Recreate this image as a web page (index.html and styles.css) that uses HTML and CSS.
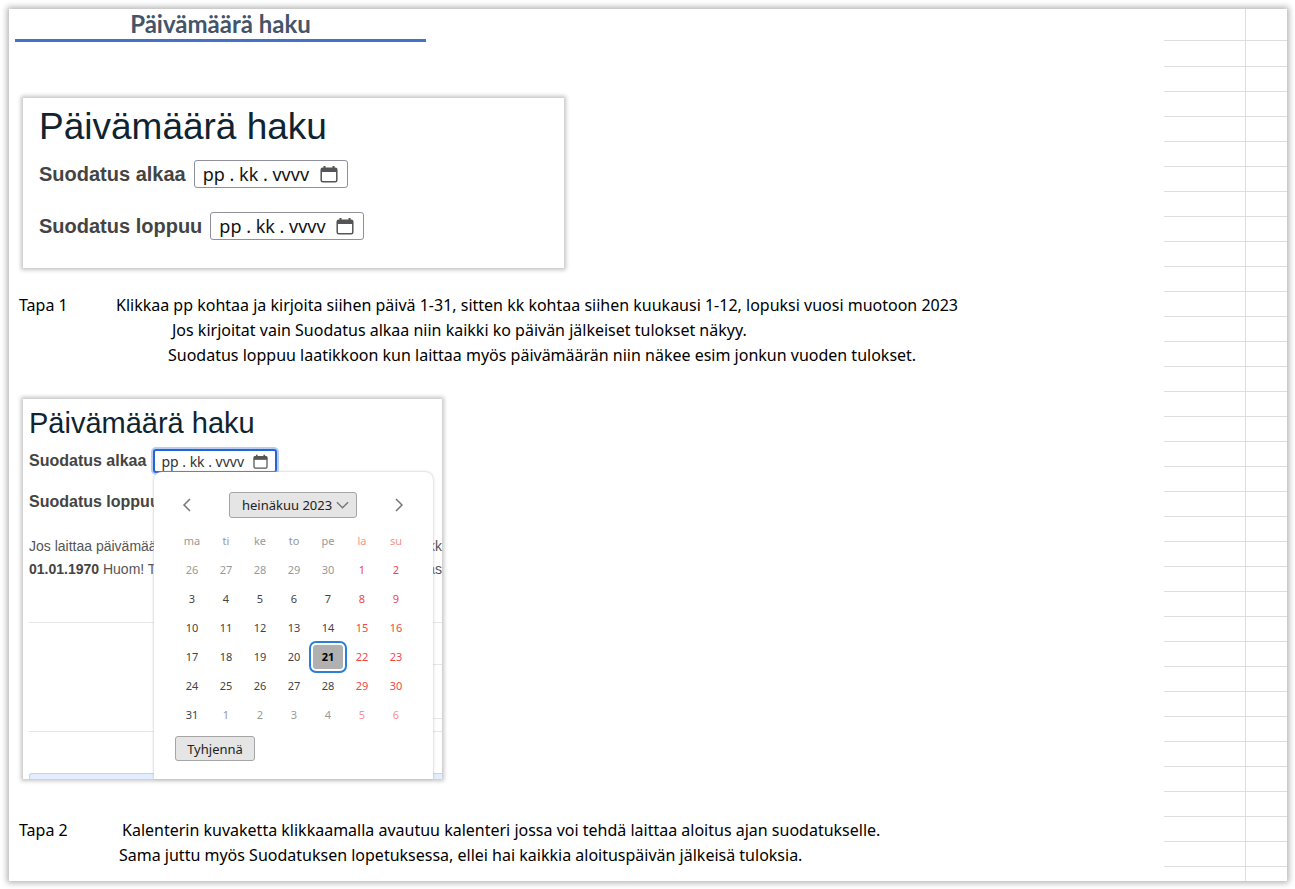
FILE: index.html
```html
<!DOCTYPE html>
<html lang="fi">
<head>
<meta charset="utf-8">
<title>Päivämäärä haku</title>
<link rel="stylesheet" href="styles.css">
</head>
<body>
<svg class="defs" aria-hidden="true">
  <symbol id="calendar" viewBox="0 0 18 18">
    <path d="M1 3h16v4H1z" fill="#555"/>
    <path d="M4.500 1v3M13.500 1v3" stroke="#555" stroke-width="2"/>
    <rect x="1.200" y="3.200" width="15.600" height="13.600" rx="1.500" fill="none" stroke="#555" stroke-width="1.500"/>
  </symbol>
</svg>
<div class="sheet">
  <main class="content">
    <h1 class="title">Päivämäärä haku</h1>

    <section class="card search">
      <h2 class="heading">Päivämäärä haku</h2>
      <div class="field">
        <label for="start">Suodatus alkaa</label>
        <span class="date"><input id="start" type="text" value="pp . kk . vvvv"><svg><use href="#calendar"/></svg></span>
      </div>
      <div class="field">
        <label for="end">Suodatus loppuu</label>
        <span class="date"><input id="end" type="text" value="pp . kk . vvvv"><svg><use href="#calendar"/></svg></span>
      </div>
    </section>

    <section class="step">
      <span class="name">Tapa 1</span>
      <div class="lines">
        <p>Klikkaa pp kohtaa ja kirjoita siihen päivä 1-31, sitten kk kohtaa siihen kuukausi 1-12, lopuksi vuosi muotoon 2023</p>
        <p class="deep">Jos kirjoitat vain Suodatus alkaa niin kaikki ko päivän jälkeiset tulokset näkyy.</p>
        <p class="mid">Suodatus loppuu laatikkoon kun laittaa myös päivämäärän niin näkee esim jonkun vuoden tulokset.</p>
      </div>
    </section>

    <section class="card picker">
      <h2 class="heading">Päivämäärä haku</h2>
      <div class="field">
        <label for="start2">Suodatus alkaa</label>
        <span class="date focused"><input id="start2" type="text" value="pp . kk . vvvv"><svg><use href="#calendar"/></svg></span>
      </div>
      <div class="field">Suodatus loppuu</div>
      <div class="note">
        <div><span>Jos laittaa päivämää</span><span>kk</span></div>
        <div><span><b>01.01.1970</b> Huom! T</span><span>as</span></div>
      </div>
      <div class="rules">
        <div class="rule first"></div>
        <div class="rule side"></div>
        <div class="rule side last"></div>
        <div class="rule base"></div>
        <div class="banner"></div>
      </div>
      <div class="popup">
        <div class="nav">
          <button type="button" class="arrow" aria-label="Edellinen"><svg viewBox="0 0 10 14"><path d="M8 1L2 7l6 6"/></svg></button>
          <button type="button" class="grey month">heinäkuu 2023 <svg viewBox="0 0 14 8"><path d="M1 1l6 6 6-6"/></svg></button>
          <button type="button" class="arrow" aria-label="Seuraava"><svg viewBox="0 0 10 14"><path d="M2 1l6 6-6 6"/></svg></button>
        </div>
        <table class="days">
          <thead><tr><th>ma</th><th>ti</th><th>ke</th><th>to</th><th>pe</th><th>la</th><th>su</th></tr></thead>
          <tbody>
            <tr><td class="out">26</td><td class="out">27</td><td class="out">28</td><td class="out">29</td><td class="out">30</td><td>1</td><td>2</td></tr>
            <tr><td>3</td><td>4</td><td>5</td><td>6</td><td>7</td><td>8</td><td>9</td></tr>
            <tr><td>10</td><td>11</td><td>12</td><td>13</td><td>14</td><td>15</td><td>16</td></tr>
            <tr><td>17</td><td>18</td><td>19</td><td>20</td><td><button type="button" class="today">21</button></td><td>22</td><td>23</td></tr>
            <tr><td>24</td><td>25</td><td>26</td><td>27</td><td>28</td><td>29</td><td>30</td></tr>
            <tr><td>31</td><td class="out">1</td><td class="out">2</td><td class="out">3</td><td class="out">4</td><td class="out">5</td><td class="out">6</td></tr>
          </tbody>
        </table>
        <button type="button" class="grey clear">Tyhjennä</button>
      </div>
    </section>

    <section class="step second">
      <span class="name">Tapa 2</span>
      <div class="lines">
        <p>Kalenterin kuvaketta klikkaamalla avautuu kalenteri jossa voi tehdä laittaa aloitus ajan suodatukselle.</p>
        <p class="near">Sama juttu myös Suodatuksen lopetuksessa, ellei hai kaikkia aloituspäivän jälkeisä tuloksia.</p>
      </div>
    </section>
  </main>
  <div class="cells" aria-hidden="true"><div class="column"></div><div class="column narrow"></div></div>
</div>
</body>
</html>
```
FILE: styles.css
```css
* { box-sizing: border-box; }
body {
  margin: 0;
  padding: 9px 8px 8px 9px;
  background: #fff;
  color: #000;
  font-family: "Noto Sans", sans-serif;
}
h1, h2, p { margin: 0; }
input, button { font: inherit; color: inherit; margin: 0; }
.defs { display: none; }

.sheet {
  display: flex;
  background: #fff;
  box-shadow: 0 0 6px 2px #b4b4b4;
}
.content { flex: 1; padding: 0 0 13px 6px; }

.title {
  width: 411px;
  height: 33px;
  border-bottom: 3px solid #4472c4;
  color: #44546a;
  font-family: Lato, sans-serif;
  font-size: 24px;
  font-weight: 700;
  line-height: 30px;
  text-align: center;
}

.card {
  margin-left: 8px;
  background: #fff;
  box-shadow: 0 0 4px 2px #c4c4c4;
  color: #444;
  font-family: "Liberation Sans", sans-serif;
}
.heading { color: #0f2430; font-weight: 400; }
.field {
  display: flex;
  align-items: center;
  font-weight: 700;
}
.date {
  display: flex;
  align-items: center;
  background: #fff;
  border: 1px solid #8f8f9d;
  border-radius: 3px;
  color: #111;
  font-family: "Noto Sans", sans-serif;
  font-weight: 400;
}
.date input {
  flex: 1;
  min-width: 0;
  padding: 0;
  border: 0;
  outline: 0;
  background: none;
}

.search {
  width: 541px;
  margin-top: 56px;
  padding: 6px 16px 28px;
}
.search .heading { font-size: 37px; line-height: 46px; }
.search .field { gap: 8px; height: 28px; font-size: 20px; }
.search .heading + .field { margin: 10px 0 24px; }
.search .date { width: 154px; height: 28px; padding: 0 9px 0 8px; font-size: 18px; }
.search .date svg { width: 18px; height: 18px; }

.step {
  display: flex;
  margin-top: 25px;
  padding-left: 4px;
  font-size: 16px;
  line-height: 25px;
}
.name { width: 97px; }
.deep { padding-left: 56px; }
.mid { padding-left: 52px; }
.second { margin-top: 39px; }
.second .name { width: 100px; }
.second .lines p { padding-left: 3px; }
.second .lines .near { padding-left: 0; }

.picker {
  position: relative;
  display: flex;
  flex-direction: column;
  width: 419px;
  height: 380px;
  margin-top: 31px;
}
.picker .heading { padding: 6px 6px 8px; font-size: 29px; line-height: 36px; }
.picker .field { gap: 7px; height: 24px; margin-bottom: 17px; padding-left: 6px; font-size: 16px; }
.picker .date { width: 124px; height: 24px; padding: 0 7px 0 6px; font-size: 14px; color: #333; }
.picker .date svg { width: 15px; height: 15px; }
.picker .focused { border: 2px solid #2563db; box-shadow: 0 0 0 2px #b9cdf2; }
.note { padding: 4px 0 0 6px; color: #555; font-size: 14px; line-height: 23px; }
.note div { display: flex; justify-content: space-between; }
.note b { color: #444; }

.rules { display: flex; flex: 1; flex-direction: column; padding-left: 6px; }
.rule { border-top: 1px solid #e6e6e6; }
.first { margin-top: 41px; }
.side { width: 12px; margin: 41px 0 0 auto; }
.last { margin-top: 53px; }
.base { margin-top: 12px; }
.banner { flex: 1; margin-top: 41px; border: 1px solid #c5d3e8; border-width: 1px 0 0 1px; border-radius: 3px 0 0; background: #e2edfd; }

/* Drops over the form, starting at the lower edge of the focused field */
.popup {
  position: absolute;
  inset: 73px 9px 0 131px;
  padding: 19px 21px 0;
  border-radius: 8px 8px 0 0;
  background: #fff;
  box-shadow: 0 0 3px #bbb;
  font-family: "Noto Sans", sans-serif;
}
.nav { display: flex; align-items: center; justify-content: space-between; height: 28px; padding: 0 8px 0 7px; }
.arrow { padding: 0; border: 0; background: none; }
.arrow svg { display: block; width: 10px; height: 14px; }
.nav path { fill: none; stroke: #777; stroke-width: 1.5; }
.grey {
  border: 1px solid #a5a5a5;
  border-radius: 3px;
  background: #e5e5e5;
  color: #222;
  font-size: 13px;
}
.month { display: flex; align-items: center; justify-content: space-between; width: 128px; height: 26px; padding: 0 7px 0 12px; }
.month svg { width: 13px; height: 8px; }
.days { width: 238px; margin-top: 7px; border-collapse: collapse; table-layout: fixed; font-size: 11px; }
.days th, .days td { height: 29px; padding: 0; text-align: center; line-height: 16px; }
.days th { color: #999; font-weight: 400; }
.days td { color: #444; }
.days td.out { color: #999; }
.days td:nth-child(n+6) { color: #f04848; }
.days th:nth-child(n+6), .days td.out:nth-child(n+6) { color: #f79090; }
.today {
  display: block;
  width: 30px;
  height: 24px;
  margin: 0 auto;
  padding: 0;
  border: 0;
  border-radius: 3px;
  background: #b0b0b0;
  box-shadow: 0 0 0 2px #fff, 0 0 0 4px #2a7fd8;
  color: #000;
  font-weight: 700;
}
.clear { width: 80px; height: 25px; margin-top: 7px; padding: 0; }

.cells { display: flex; flex-direction: row; width: 123px; }
.column {
  flex: 1;
  border-right: 1px solid #dedede;
  background:
    linear-gradient(#dedede, #dedede) 0 31px / 100% 1px no-repeat,
    repeating-linear-gradient(transparent 0 24px, #dedede 24px 25px) 0 33px / 100% 100% no-repeat;
}
.narrow { flex: 0 0 41px; border-right: 0; }
```
